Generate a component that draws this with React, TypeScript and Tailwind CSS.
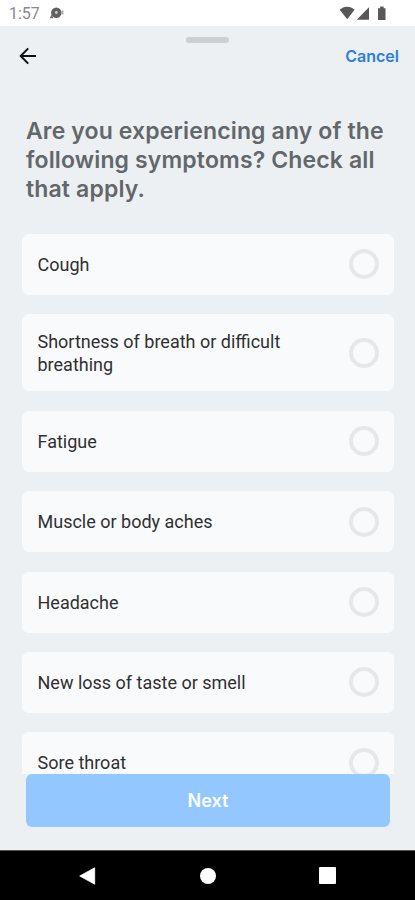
import { useState } from 'react';

const symptoms = [
  'Cough',
  'Shortness of breath or difficult breathing',
  'Fatigue',
  'Muscle or body aches',
  'Headache',
  'New loss of taste or smell',
  'Sore throat',
];

function StatusBar() {
  return (
    <div className="flex h-[26px] shrink-0 items-center bg-white pl-[9px] pr-[28px]">
      <span className="w-[29px] pt-[2px] text-[16px] leading-[24px] text-[#8a8a8a]">1:57</span>
      <svg className="ml-[11px]" width="16" height="14" viewBox="0 0 16 14">
        <circle cx="7.3" cy="6.7" r="5.2" fill="#606060" />
        <path d="M2.6 8.5.6 12.2h3.8z" fill="#707070" />
        <path d="M12.5 4.5h2v4h-2z" fill="#aaa" />
        <circle cx="7.3" cy="6.5" r="1.4" fill="#ccc" />
      </svg>
      <svg className="ml-auto" width="48" height="16" viewBox="0 0 48 16" fill="#585858">
        <path d="M.7 4.7C4.8.8 11.5.8 15.6 4.7L8.2 14.2z" />
        <path d="M30 2.2v12.6H17.7z" />
        <path d="M39 3.3h2.2V1.5h3.4v1.8h1.9v11.6H39z" />
      </svg>
    </div>
  );
}

function NavBar() {
  return (
    <div className="flex h-[50px] shrink-0 items-center justify-between border-t border-[#555] bg-black pl-[78px] pr-[79px]">
      <svg width="18" height="18" viewBox="0 0 18 18" fill="#fff">
        <path d="M16.7.8v16.4L1.7 9z" stroke="#fff" strokeWidth=".8" strokeLinejoin="round" />
      </svg>
      <span className="size-4 rounded-full bg-white" />
      <span className="size-[17px] rounded-[1px] bg-white" />
    </div>
  );
}

export default function App() {
  const [selected, setSelected] = useState<string[]>([]);

  const toggle = (name: string) =>
    setSelected((prev) => (prev.includes(name) ? prev.filter((s) => s !== name) : [...prev, name]));

  return (
    <div className="flex h-[900px] w-[415px] flex-col overflow-hidden bg-[#ecf0f3] font-[Roboto,sans-serif]">
      <StatusBar />

      <div className="flex h-[17px] shrink-0 items-end justify-center">
        <span className="h-[6px] w-[43px] rounded-[3px] bg-[#cdcfd1]" />
      </div>

      <header className="flex h-[26px] shrink-0 items-center justify-between pl-[19px] pr-4">
        <button aria-label="Back">
          <svg width="18" height="18" viewBox="0 0 18 18" fill="none" stroke="#111" strokeWidth="2">
            <path d="M17 9H2M9.2 1.4 1.7 9l7.5 7.6" />
          </svg>
        </button>
        <button className="font-[Inter,sans-serif] text-[16px] font-semibold text-[#2a7fdf]">Cancel</button>
      </header>

      <h1 className="mt-[48.4px] shrink-0 pl-[26px] font-[Inter,sans-serif] text-[23px] font-semibold leading-[29px] tracking-[0.14px] text-[#63676a]">
        Are you experiencing any of the
        <br />
        following symptoms? Check all
        <br />
        that apply.
      </h1>

      <ul className="mt-[29.6px] flex min-h-0 flex-1 flex-col gap-[19.4px] overflow-hidden pl-[22px] pr-[21px]">
        {symptoms.map((name) => (
          <li
            key={name}
            onClick={() => toggle(name)}
            className="flex min-h-[61px] shrink-0 items-center justify-between rounded-[7px] bg-[#f9fafc] py-[15.5px] pl-[15.5px] pr-[15.5px]"
          >
            <span className="w-[265px] text-[18px] leading-[23px] text-[#303030]">{name}</span>
            <span
              className={`size-[30px] rounded-full border-4 ${
                selected.includes(name) ? 'border-[#2a7fdf]' : 'border-[#e6e7e9]'
              }`}
            />
          </li>
        ))}
      </ul>

      <div className="shrink-0 pb-[23px] pl-[26px] pr-[25px]">
        <button className="h-[53px] w-full rounded-[6px] bg-[#92c8ff] font-[Inter,sans-serif] text-[18px] font-semibold text-white">
          Next
        </button>
      </div>

      <NavBar />
    </div>
  );
}
